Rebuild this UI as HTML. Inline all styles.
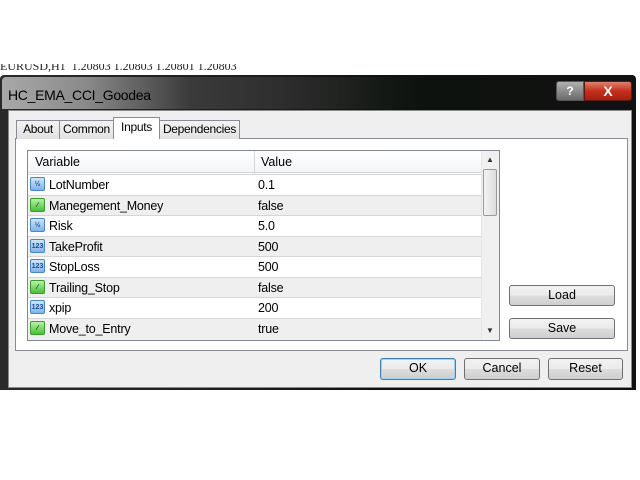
<!DOCTYPE html>
<html><head><meta charset="utf-8"><style>
*{margin:0;padding:0;box-sizing:border-box}
body{width:640px;height:480px;background:#fff;position:relative;overflow:hidden;font-family:"Liberation Sans",sans-serif;font-size:12px;color:#000}
.a{position:absolute}
.frame{left:0;top:75px;width:636px;height:315px;background:linear-gradient(90deg,#2a2a2a 0%,#1c1c1c 40%,#0d120d 60%,#111 100%);border-radius:4px 4px 0 0}
.btn{position:absolute;border:1px solid #707070;border-radius:3px;background:linear-gradient(#f2f2f2,#ebebeb 50%,#dddddd 51%,#cfcfcf);text-align:center;font-size:12.5px;line-height:19px;color:#000}
.row{position:absolute;left:28px;width:453px;height:20.5px;border-top:1px solid #d6d6d6}
.row span{position:absolute;top:3px;font-size:12.5px;letter-spacing:-0.2px}
.ic{position:absolute;left:2px;top:2px;width:15px;height:14px;border-radius:2px;font-size:7px;font-weight:bold;line-height:13px;text-align:center}
.b{background:linear-gradient(#cfe6fb,#7fb3e6);border:1px solid #4a86c5;color:#1a4f9a}
.g{background:linear-gradient(#b8f0a8,#4cbf3a);border:1px solid #3a9a2a;color:#0a4a0a}
.tab{position:absolute;top:120px;height:19px;border:1px solid #898c95;border-bottom:none;background:linear-gradient(#f3f3f3,#e2e2e2);line-height:17px;font-size:12px;text-align:center;letter-spacing:-0.3px}
</style></head><body>
<div class="a" style="left:0;top:64px;height:10px;overflow:hidden;width:640px"><div style="margin-top:-5px;font-size:12px;font-family:'Liberation Serif',serif;color:#222">EURUSD,H1 &nbsp;1.20803 1.20803 1.20801 1.20803</div></div>
<div class="a frame"></div>
<div class="a" style="left:2px;top:77px;width:420px;height:32px;background:linear-gradient(90deg,#a8a8a8 0%,#8a8a8a 20%,#3a3a3a 45%,rgba(30,30,30,0) 100%);border-radius:4px 0 0 0"></div>
<div class="a" style="left:8px;top:87px;font-size:14px;color:#000;letter-spacing:-0.3px">HC_EMA_CCI_Goodea</div>
<div class="a" style="left:556px;top:81px;width:28px;height:20px;border:1px solid #555;border-radius:3px 0 0 3px;background:linear-gradient(#b0b0b0,#6a6a6a);color:#fff;text-align:center;font-weight:bold;line-height:18px">?</div>
<div class="a" style="left:584px;top:81px;width:48px;height:20px;border:1px solid #5a1a10;border-radius:0 3px 3px 0;background:linear-gradient(#e08070,#c4301c 50%,#a82010);color:#fff;text-align:center;font-weight:bold;line-height:18px;font-size:14px">X</div>
<div class="a" style="left:8px;top:110px;width:624px;height:278px;background:#efefef;border:1px solid #8a8a8a"></div>
<div class="a" style="left:15px;top:138px;width:613px;height:213px;background:#fff;border:1px solid #898c95"></div>
<div class="tab" style="left:16px;width:44px">About</div>
<div class="tab" style="left:59px;width:55px">Common</div>
<div class="tab" style="left:113px;top:117px;height:22px;width:47px;background:#fff;padding-top:1px;z-index:2">Inputs</div>
<div class="tab" style="left:159px;width:81px">Dependencies</div>
<div class="a" style="left:27px;top:150px;width:473px;height:191px;border:1px solid #828790;background:#fff"></div>
<div class="a" style="left:28px;top:151px;width:453px;height:22px;background:linear-gradient(#fff,#f3f5f8);border-bottom:1px solid #d5d5d5"></div>
<div class="a" style="left:35px;top:155px;font-size:12.5px">Variable</div>
<div class="a" style="left:254px;top:151px;width:1px;height:189px;background:#d6d6d6"></div>
<div class="a" style="left:261px;top:155px;font-size:12.5px">Value</div>
<div class="row" style="top:174px;background:#fff"><div class="ic b">½</div><span style="left:21px">LotNumber</span><span style="left:230px">0.1</span></div>
<div class="row" style="top:194.5px;background:#efefef"><div class="ic g">⁄</div><span style="left:21px">Manegement_Money</span><span style="left:230px">false</span></div>
<div class="row" style="top:215px;background:#fff"><div class="ic b">½</div><span style="left:21px">Risk</span><span style="left:230px">5.0</span></div>
<div class="row" style="top:235.5px;background:#efefef"><div class="ic b">123</div><span style="left:21px">TakeProfit</span><span style="left:230px">500</span></div>
<div class="row" style="top:256px;background:#fff"><div class="ic b">123</div><span style="left:21px">StopLoss</span><span style="left:230px">500</span></div>
<div class="row" style="top:276.5px;background:#efefef"><div class="ic g">⁄</div><span style="left:21px">Trailing_Stop</span><span style="left:230px">false</span></div>
<div class="row" style="top:297px;background:#fff"><div class="ic b">123</div><span style="left:21px">xpip</span><span style="left:230px">200</span></div>
<div class="row" style="top:317.5px;background:#efefef;height:22px"><div class="ic g">⁄</div><span style="left:21px">Move_to_Entry</span><span style="left:230px">true</span></div>
<div class="a" style="left:481px;top:151px;width:18px;height:189px;background:#f0f0f0;border-left:1px solid #e5e5e5"></div>
<div class="a" style="left:486px;top:155px;font-size:8px;color:#333">▲</div>
<div class="a" style="left:483px;top:169px;width:14px;height:47px;border:1px solid #9a9a9a;border-radius:2px;background:linear-gradient(90deg,#f4f4f4,#dcdcdc)"></div>
<div class="a" style="left:486px;top:326px;font-size:8px;color:#333">▼</div>
<div class="btn" style="left:509px;top:285px;width:106px;height:21px">Load</div>
<div class="btn" style="left:509px;top:318px;width:106px;height:21px">Save</div>
<div class="btn" style="left:380px;top:358px;width:76px;height:22px;border-color:#3c7fb1;box-shadow:inset 0 0 0 1px #9ed2f0">OK</div>
<div class="btn" style="left:464px;top:358px;width:76px;height:22px">Cancel</div>
<div class="btn" style="left:548px;top:358px;width:75px;height:22px">Reset</div>
</body></html>
